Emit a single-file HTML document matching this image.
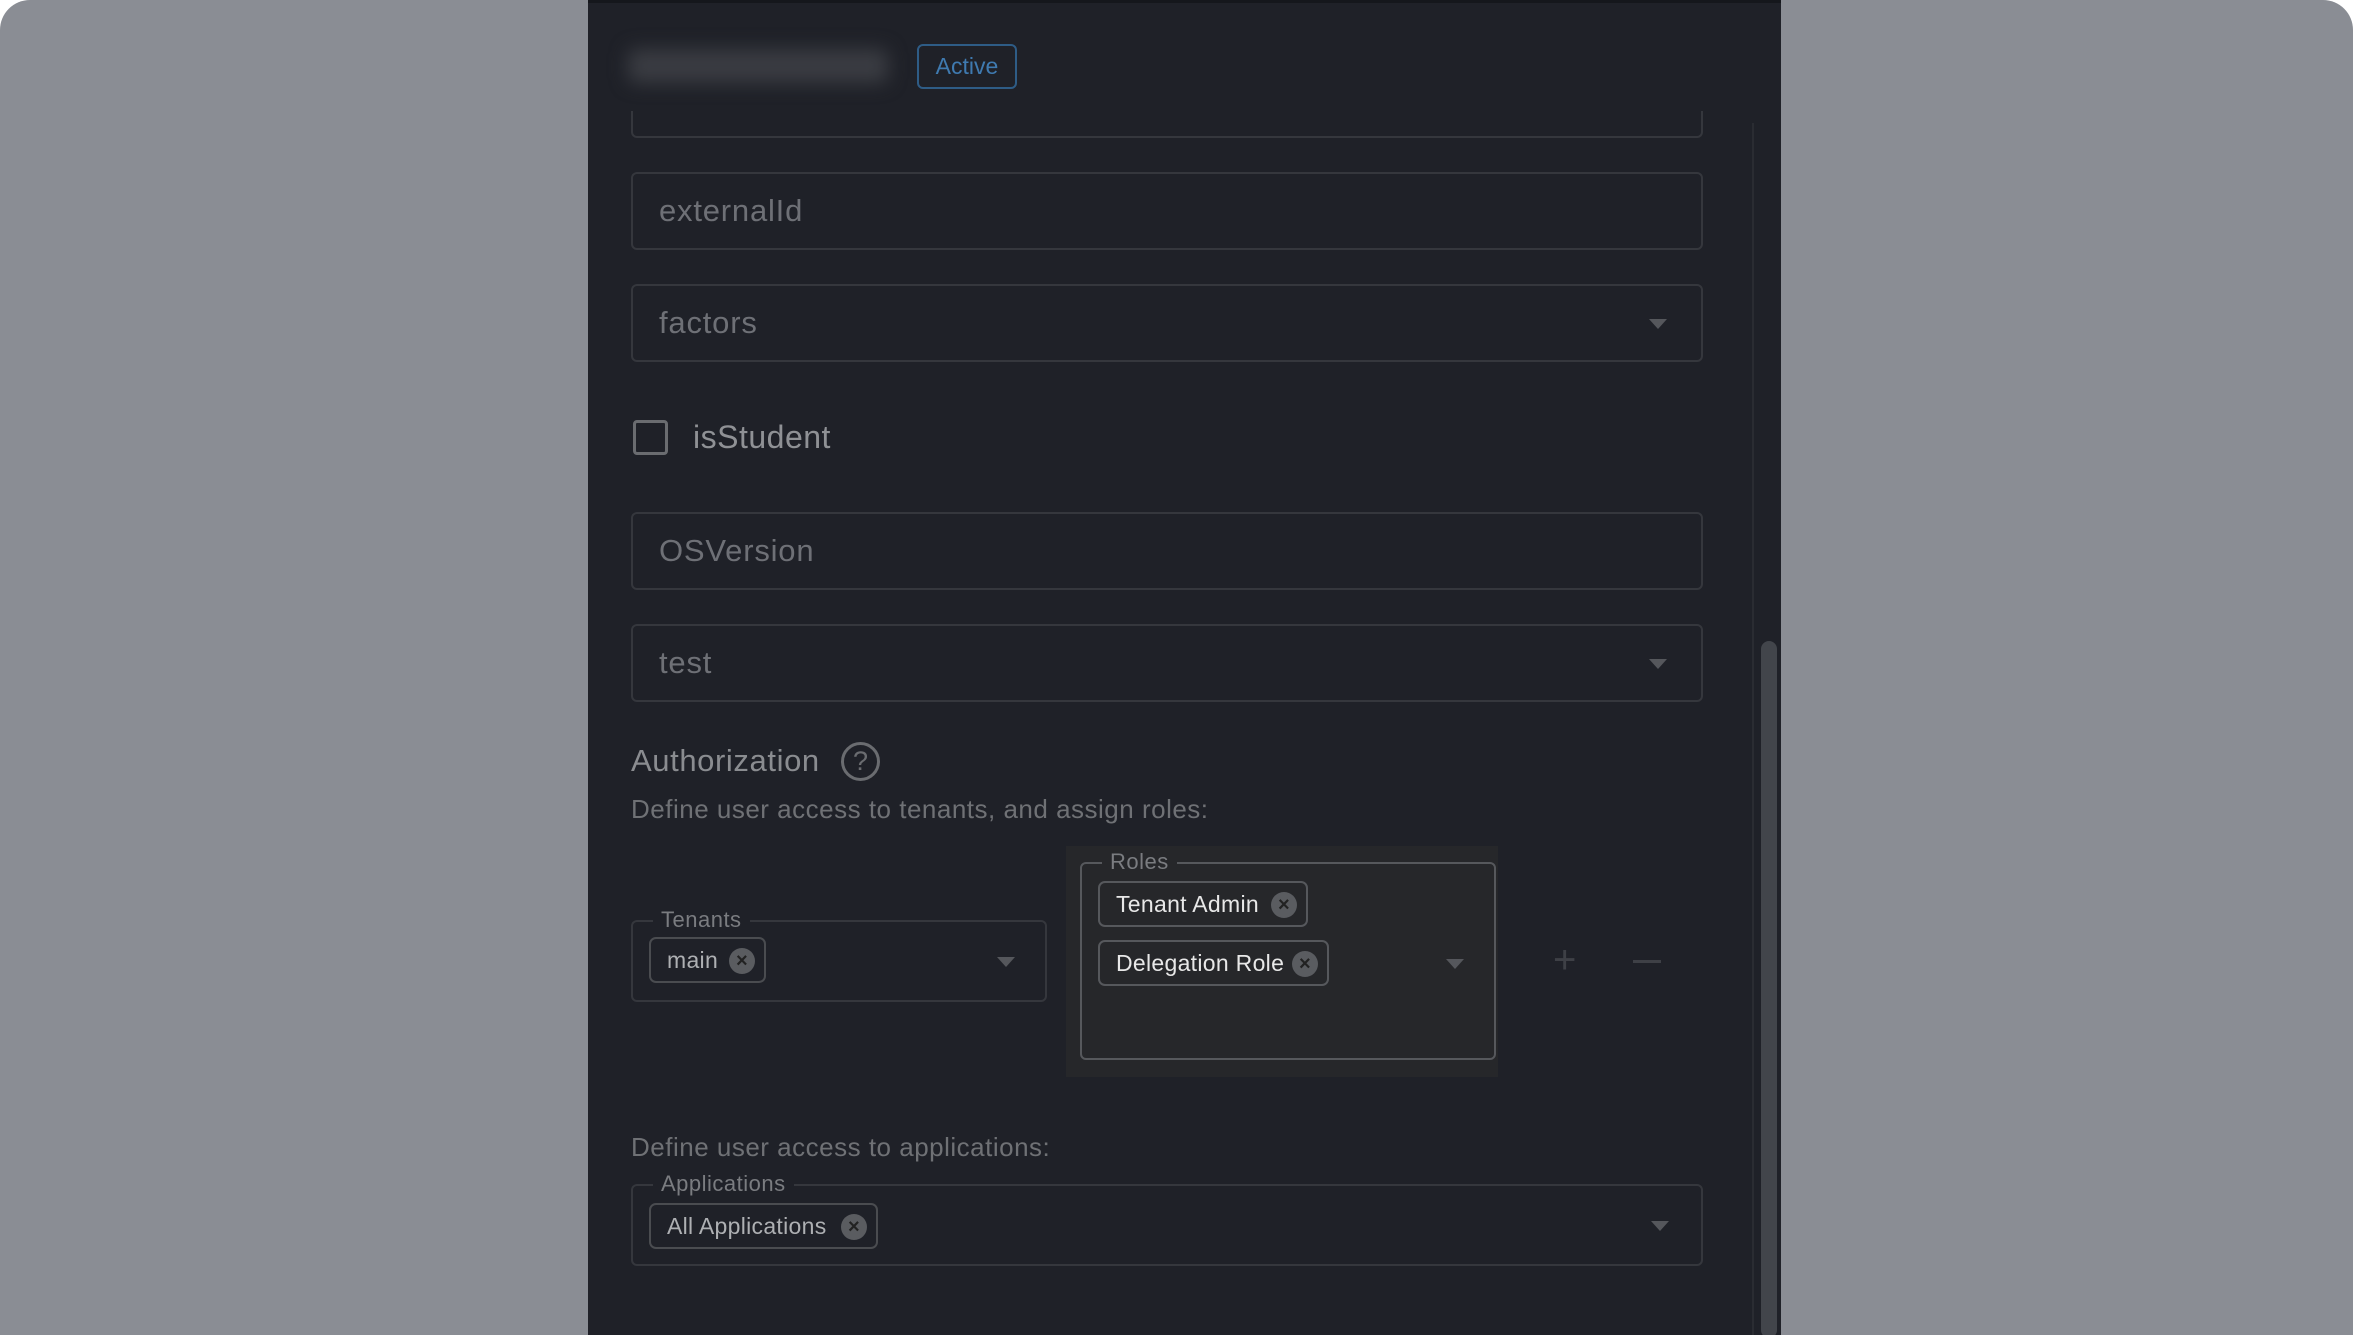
<!DOCTYPE html>
<html><head><meta charset="utf-8"><style>
*{box-sizing:border-box;margin:0;padding:0}
html,body{width:2353px;height:1335px;background:#fff;overflow:hidden}
#bg{position:absolute;left:0;top:0;width:2353px;height:1335px;background:#8a8d94;border-radius:30px 30px 0 0;font-family:"Liberation Sans",sans-serif;overflow:hidden}
#panel{position:absolute;left:588px;top:0;width:1193px;height:1335px;background:#1f2128;border-top:3px solid #15171c;overflow:hidden}
.a{position:absolute}
.field{position:absolute;left:43px;width:1072px;height:78px;border:2px solid #35373d;border-radius:6px;color:#6e7076;font-size:31px;padding-left:26px;line-height:74px;letter-spacing:.8px}
.arrow{position:absolute;width:0;height:0;border-left:9px solid transparent;border-right:9px solid transparent;border-top:10px solid #55575c}
.fs{position:absolute;border:2px solid #35373d;border-radius:6px}
.leg{position:absolute;top:-15px;left:20px;padding:0 8px;font-size:22px;color:#7a7c80;line-height:26px;letter-spacing:.5px}
.chip{position:absolute;height:46px;border:2px solid #4a4c50;border-radius:7px;font-size:23px;line-height:42px;padding-left:16px;color:#aeb0b3;letter-spacing:.3px}
.x{position:absolute;top:9px;width:26px;height:26px;border-radius:50%;background:#5a5c60;color:#222;font-size:20px;line-height:26px;text-align:center;font-weight:bold}
</style></head><body><div id="bg">
<div id="panel">
 <div class="a" style="left:40px;top:46px;width:260px;height:34px;background:#3a3c42;filter:blur(9px);border-radius:8px"></div>
 <div class="a" style="left:329px;top:41px;width:100px;height:45px;border:2px solid #2e5c86;border-radius:6px;color:#3f7ab0;font-size:23px;line-height:41px;text-align:center">Active</div>
 <div class="a" style="left:43px;top:108px;width:1072px;height:27px;border:2px solid #35373d;border-top:none;border-radius:0 0 6px 6px"></div>
 <div class="a" style="left:1164px;top:120px;width:2px;height:1215px;background:#2a2c32"></div>
 <div class="a" style="left:1173px;top:638px;width:16px;height:697px;background:#42454b;border-radius:8px"></div>
 <div class="field" style="top:169px">externalId</div>
 <div class="field" style="top:281px">factors<div class="arrow" style="right:34px;top:33px"></div></div>
 <div class="a" style="left:45px;top:417px;width:35px;height:35px;border:3px solid #6a6c70;border-radius:4px"></div>
 <div class="a" style="left:105px;top:414px;font-size:32px;color:#8f9195;line-height:40px;letter-spacing:.5px">isStudent</div>
 <div class="field" style="top:509px">OSVersion</div>
 <div class="field" style="top:621px">test<div class="arrow" style="right:34px;top:33px"></div></div>
 <div class="a" style="left:43px;top:738px;font-size:31px;color:#8a8c90;line-height:40px;letter-spacing:.6px">Authorization</div>
 <div class="a" style="left:253px;top:739px;width:39px;height:39px;border:3px solid #6a6c70;border-radius:50%;color:#6a6c70;font-size:27px;line-height:33px;text-align:center">?</div>
 <div class="a" style="left:43px;top:790px;font-size:26px;color:#6f7175;line-height:32px;letter-spacing:.5px">Define user access to tenants, and assign roles:</div>
 <div class="fs" style="left:43px;top:917px;width:416px;height:82px"><div class="leg" style="background:#1f2128">Tenants</div>
  <div class="chip" style="left:16px;top:15px;width:117px">main<div class="x" style="left:78px">×</div></div>
  <div class="arrow" style="right:30px;top:35px"></div></div>
 <div class="a" style="left:478px;top:843px;width:432px;height:231px;background:#26272a"></div>
 <div class="fs" style="left:492px;top:859px;width:416px;height:198px;border-color:#56585c"><div class="leg" style="background:#26272a">Roles</div>
  <div class="chip" style="left:16px;top:17px;width:210px;color:#e8e8e8;border-color:#56585c">Tenant Admin<div class="x" style="left:171px">×</div></div>
  <div class="chip" style="left:16px;top:76px;width:231px;color:#e8e8e8;border-color:#56585c">Delegation Role<div class="x" style="left:192px">×</div></div>
  <div class="arrow" style="right:30px;top:95px"></div></div>
 <div class="a" style="left:965px;top:937px;font-size:40px;color:#3e4046;line-height:40px">+</div>
 <div class="a" style="left:1045px;top:957px;width:28px;height:3px;background:#3e4046"></div>
 <div class="a" style="left:43px;top:1128px;font-size:26px;color:#6f7175;line-height:32px;letter-spacing:.5px">Define user access to applications:</div>
 <div class="fs" style="left:43px;top:1181px;width:1072px;height:82px"><div class="leg" style="background:#1f2128">Applications</div>
  <div class="chip" style="left:16px;top:17px;width:229px">All Applications<div class="x" style="left:190px">×</div></div>
  <div class="arrow" style="right:32px;top:35px"></div></div>
</div>
</div></body></html>
